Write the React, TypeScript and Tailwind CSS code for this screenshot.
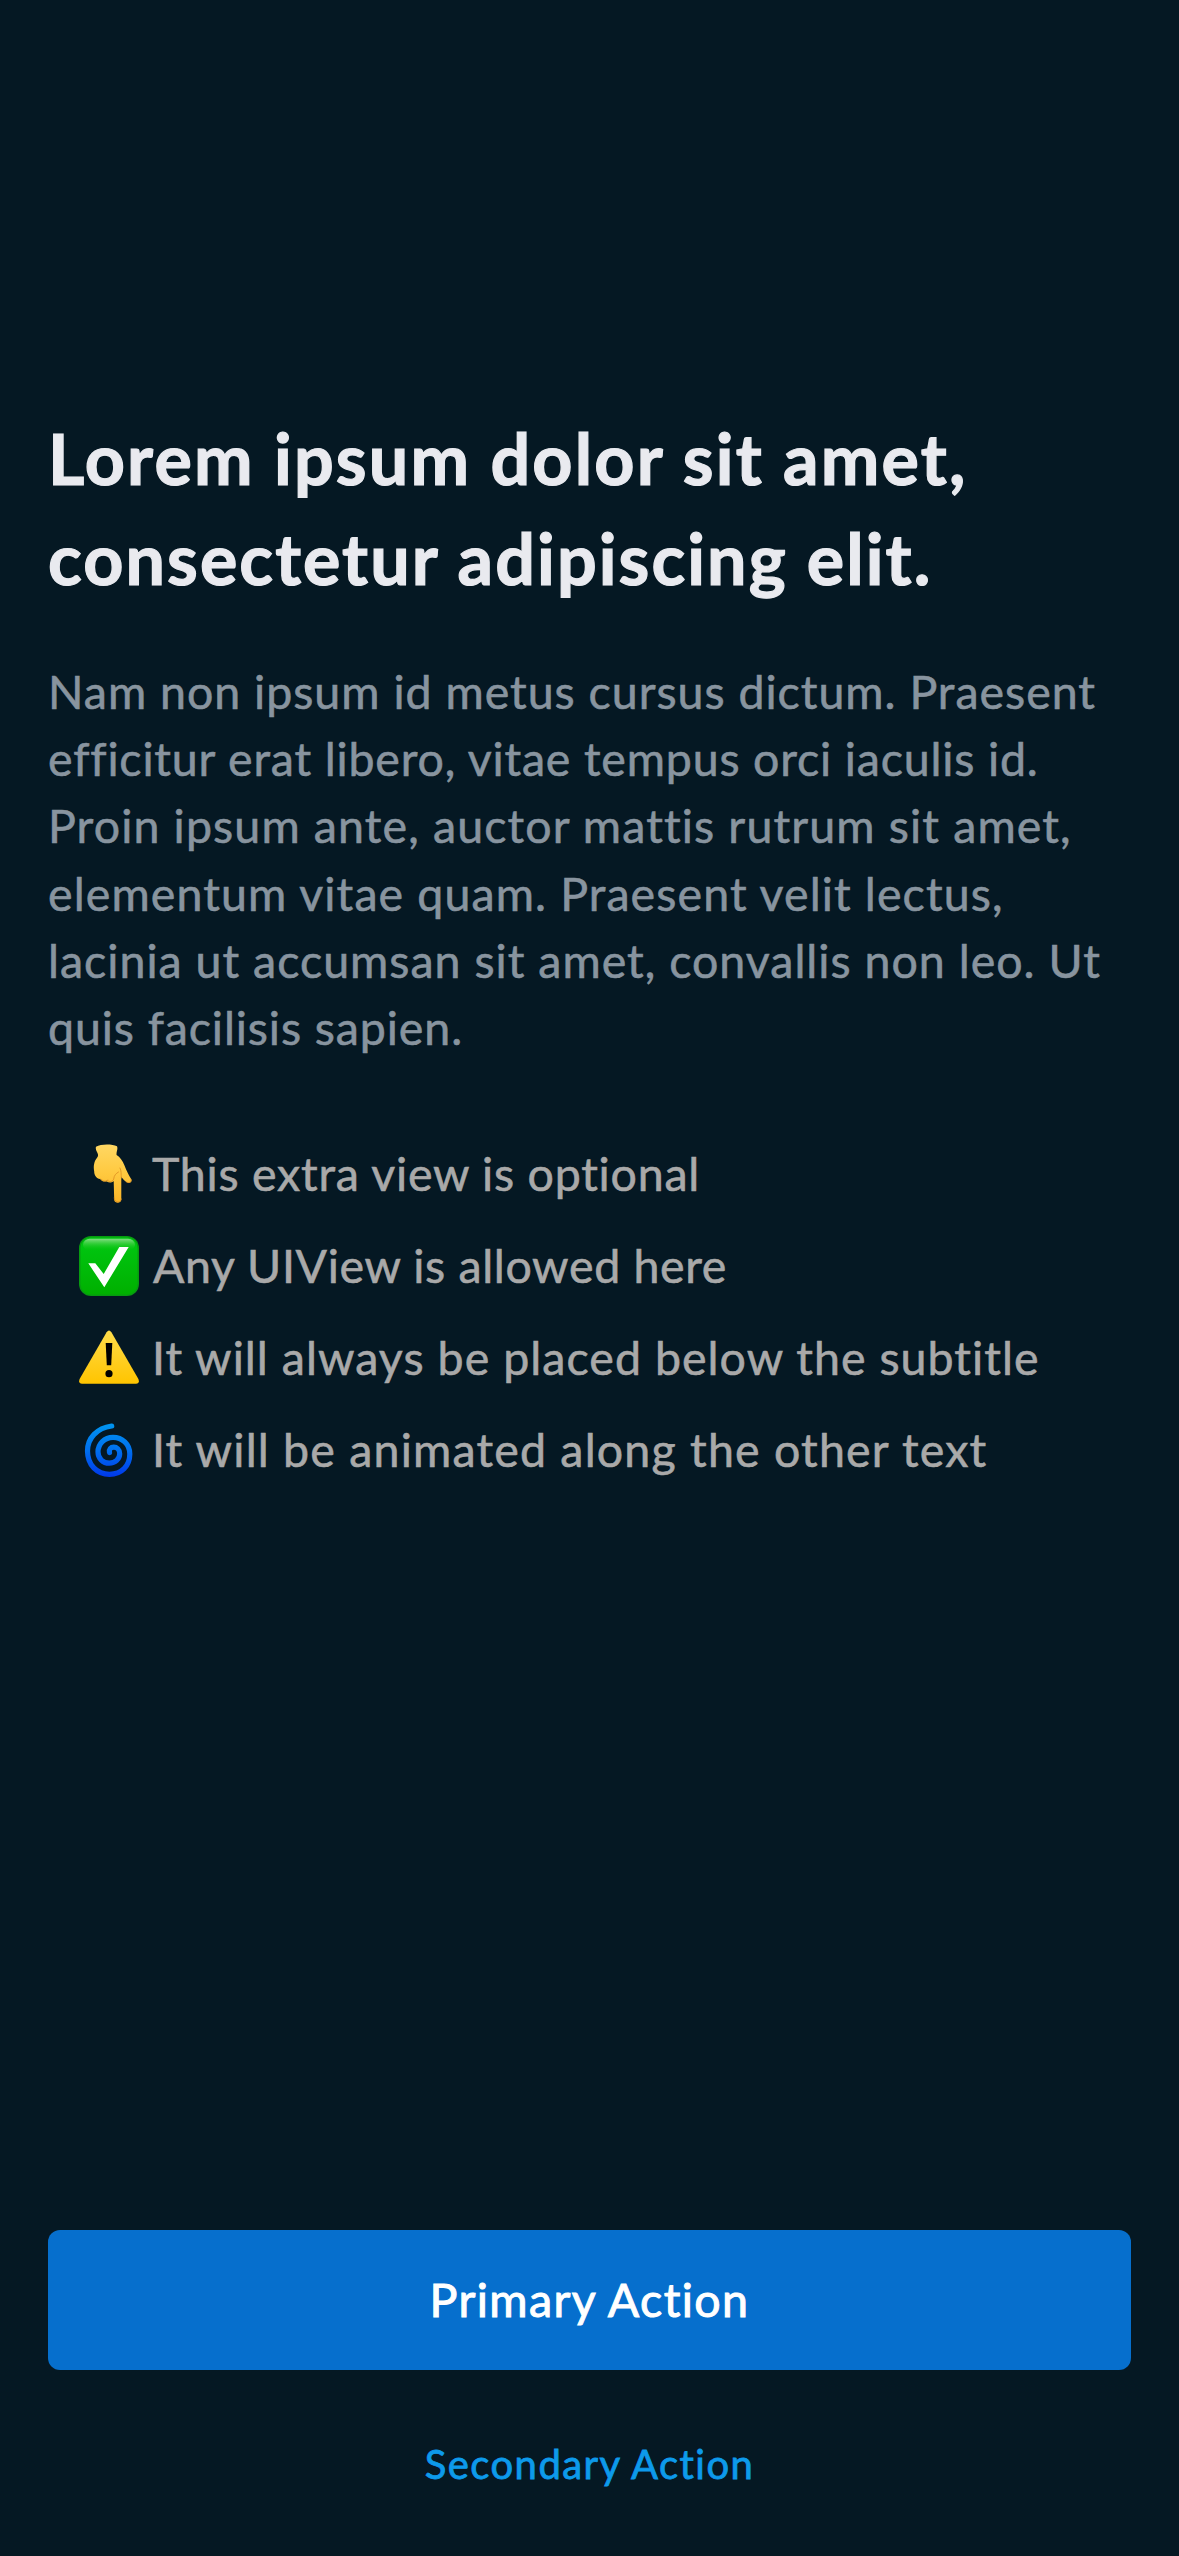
import type { ReactNode } from 'react';

const titleLines = [
  { text: 'Lorem ipsum dolor sit amet,', spacing: 'tracking-[2.18px]' },
  { text: 'consectetur adipiscing elit.', spacing: 'tracking-[2.08px]' },
];

const subtitleLines = [
  { text: 'Nam non ipsum id metus cursus dictum. Praesent', spacing: 'tracking-[0.98px]' },
  { text: 'efficitur erat libero, vitae tempus orci iaculis id.', spacing: 'tracking-[0.82px]' },
  { text: 'Proin ipsum ante, auctor mattis rutrum sit amet,', spacing: 'tracking-[1.13px]' },
  { text: 'elementum vitae quam. Praesent velit lectus,', spacing: 'tracking-[1.11px]' },
  { text: 'lacinia ut accumsan sit amet, convallis non leo. Ut', spacing: 'tracking-[1px]' },
  { text: 'quis facilisis sapien.', spacing: 'tracking-[0.9px]' },
];

function PointingDown() {
  return (
    <svg viewBox="0 0 60 60" className="mt-0.5 h-[60px] w-[60px] shrink-0">
      <defs>
        <linearGradient id="hand" x1="0" y1="0" x2="0" y2="1">
          <stop offset="0" stopColor="#ffd763" />
          <stop offset="0.5" stopColor="#ffc93f" />
          <stop offset="1" stopColor="#f9b427" />
        </linearGradient>
      </defs>
      <path
        d="M17 2.8C22 -.2 33 0 38 2.2C39.3 5 37 8 37.6 11C41 13 43.5 16.5 45.5 21.5C47.5 26.5 49.5 31 52 34.7C54 38 50.5 40.2 47.6 38.2C45.3 36.7 43.8 34.8 42.3 33V56C41.8 59.5 35.7 59.5 35.2 56L34.7 37C33 38.8 30 39 27.8 37.4C25 38 22.3 37 21 35C17.5 34.5 15 31 15.2 27.2C14.4 24 14.8 20 16 17C17 14.5 19.5 13 19 10.5C18.6 7.8 16 6 17 2.8Z"
        fill="url(#hand)"
      />
      <path
        d="M22 35C24 37.5 27 38 28.5 36M28.5 36.5C31 38.5 34 37.5 34.7 35C35.2 31 37 29.5 39.5 28M42.3 34C42 30 42.5 27 41 24M47.6 38C50 39.6 53 38 52 35.2M35.2 54C35.4 59.2 41.8 59.2 42.3 55"
        fill="none"
        stroke="#d98a1f"
        strokeWidth="1"
        strokeLinecap="round"
        opacity="0.75"
      />
    </svg>
  );
}

function CheckBox() {
  return (
    <svg viewBox="0 0 60 60" className="mt-0.5 h-[60px] w-[60px] shrink-0">
      <defs>
        <linearGradient id="gloss" x1="0" y1="0" x2="0" y2="1">
          <stop offset="0" stopColor="#85dd85" />
          <stop offset="1" stopColor="#0cc40c" stopOpacity="0" />
        </linearGradient>
        <linearGradient id="green" x1="0" y1="0" x2="0" y2="1">
          <stop offset="0" stopColor="#00c812" />
          <stop offset="1" stopColor="#00b000" />
        </linearGradient>
      </defs>
      <rect width="60" height="60" rx="12" fill="#079b10" />
      <rect x="1.5" y="1.5" width="57" height="57" rx="10.5" fill="url(#green)" />
      <rect x="4" y="2.8" width="52" height="12" rx="7" fill="url(#gloss)" />
      <path d="M9.3 27.3H16.3L24.7 38L40.3 11H49.7L25.3 51.3Z" fill="#fff" />
    </svg>
  );
}

function Warning() {
  return (
    <svg viewBox="0 0 60 60" className="mt-0.5 h-[60px] w-[60px] shrink-0">
      <defs>
        <linearGradient id="sign" x1="0" y1="0" x2="0" y2="1">
          <stop offset="0" stopColor="#ffdc4a" />
          <stop offset="1" stopColor="#ffc400" />
        </linearGradient>
      </defs>
      <path
        d="M27.6 4.2Q30 1 32.4 4.2L59.4 51Q61 55.3 57 55.7H3Q-1 55.3 .6 51Z"
        fill="url(#sign)"
      />
      <path d="M26.7 15H33.3L32.2 37.3H27.8Z" fill="#000" />
      <circle cx="30" cy="45.7" r="3.6" fill="#000" />
    </svg>
  );
}

function Cyclone() {
  return (
    <svg viewBox="0 0 60 60" className="mt-0.5 h-[60px] w-[60px] shrink-0">
      <defs>
        <linearGradient id="swirl" gradientUnits="userSpaceOnUse" x1="0" y1="3" x2="0" y2="57">
          <stop offset="0" stopColor="#0096f0" />
          <stop offset="0.5" stopColor="#0070ee" />
          <stop offset="1" stopColor="#0038ea" />
        </linearGradient>
      </defs>
      <path
        d="M32.7 6C18 8 8.5 18 8.5 31C8.5 45 18 54.3 30.5 54.3C42.5 54.3 50.8 46 50.8 34C50.8 24 43 17.3 34 17.3C25.5 17.3 19 24 19 32C19 38.5 24 43.2 30.3 43.2C36.3 43.2 40.7 39 40.7 33.8C40.7 29.5 37.5 27.2 34.8 27.2C31.7 27.2 29.8 29.3 30.5 32.5"
        fill="none"
        stroke="url(#swirl)"
        strokeWidth="5.2"
        strokeLinecap="round"
        strokeLinejoin="round"
      />
    </svg>
  );
}

const notes: { icon: ReactNode; text: string; spacing: string }[] = [
  { icon: <PointingDown />, text: 'This extra view is optional', spacing: 'tracking-[0.77px]' },
  { icon: <CheckBox />, text: 'Any UIView is allowed here', spacing: 'ml-px tracking-[0.65px]' },
  { icon: <Warning />, text: 'It will always be placed below the subtitle', spacing: 'tracking-[1.04px]' },
  { icon: <Cyclone />, text: 'It will be animated along the other text', spacing: 'tracking-[1.2px]' },
];

export default function App() {
  return (
    <div className="flex h-[2556px] w-[1179px] flex-col overflow-hidden bg-[#051823] px-12 pt-[408px] font-['Lato',sans-serif] whitespace-nowrap">
      <h1 className="text-[70px] leading-[100px] font-bold text-[#e9eaef] [-webkit-text-stroke:1.2px_#e9eaef]">
        {titleLines.map((line) => (
          <span key={line.text} className={`block ${line.spacing}`}>
            {line.text}
          </span>
        ))}
      </h1>

      <p className="mt-[50px] text-[46.5px] leading-[67.2px] text-[#88949f] [-webkit-text-stroke:0.6px_#88949f]">
        {subtitleLines.map((line) => (
          <span key={line.text} className={`block ${line.spacing}`}>
            {line.text}
          </span>
        ))}
      </p>

      <ul className="mt-[66px] pl-[31px] text-[46.5px] leading-[92px] text-[#a9a9a9] [-webkit-text-stroke:0.6px_#a9a9a9]">
        {notes.map((note) => (
          <li key={note.text} className="flex h-[92px] items-center gap-[13px]">
            {note.icon}
            <span className={note.spacing}>{note.text}</span>
          </li>
        ))}
      </ul>

      <div className="mt-auto flex flex-col pb-[46px]">
        <button className="h-[140px] rounded-xl bg-[#066fcd] text-[46.5px] tracking-[1.4px] text-white [-webkit-text-stroke:1px_#fff]">
          Primary Action
        </button>
        <button className="mt-12 h-[92px] text-[40px] tracking-[1.45px] text-[#0d9aeb] [-webkit-text-stroke:0.8px_#0d9aeb]">
          Secondary Action
        </button>
      </div>
    </div>
  );
}
